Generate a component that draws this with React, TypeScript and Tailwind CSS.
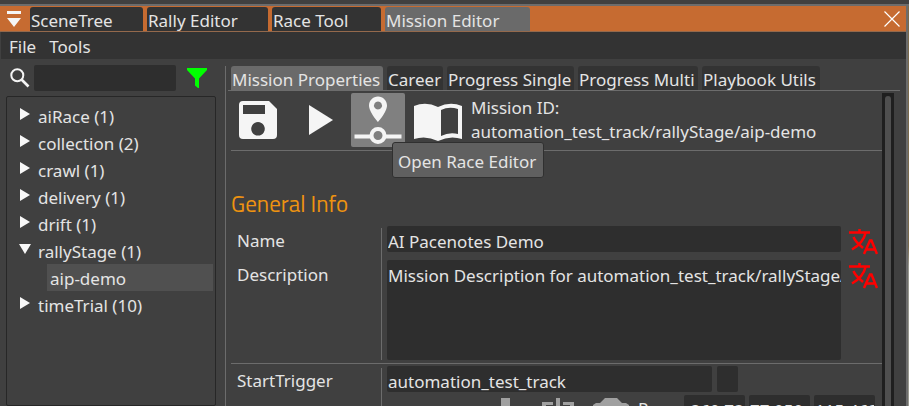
import type { ReactNode } from "react";

const windowTabs = [
  { name: "SceneTree", width: "w-[113px]" },
  { name: "Rally Editor", width: "w-[121px]" },
  { name: "Race Tool", width: "w-[109px]" },
  { name: "Mission Editor", width: "w-[145px]", active: true },
];

const panelTabs = [
  { name: "Mission Properties", width: "w-[152px]", active: true },
  { name: "Career", width: "w-[56px]" },
  { name: "Progress Single", width: "w-[127px]" },
  { name: "Progress Multi", width: "w-[120px]" },
  { name: "Playbook Utils", width: "w-[118px]" },
];

const groups = [
  { name: "aiRace (1)" },
  { name: "collection (2)" },
  { name: "crawl (1)" },
  { name: "delivery (1)" },
  { name: "drift (1)" },
  { name: "rallyStage (1)", children: ["aip-demo"] },
  { name: "timeTrial (10)" },
];

function TitleBar() {
  return (
    <header className="flex h-[26px] items-end border-b border-[#94694c] bg-[#c66b31]">
      <button aria-label="Window list" className="h-full w-[30px] shrink-0 pl-[7px]">
        <svg width="14" height="18" viewBox="0 0 14 18" fill="#f5f5f5">
          <path d="M0 1h14v3H0zM0 8h14L7 17z" />
        </svg>
      </button>
      <nav className="flex h-6 gap-1">
        {windowTabs.map((tab) => (
          <button
            key={tab.name}
            className={`${tab.width} ${tab.active ? "bg-[#6a6a6a]" : "bg-[#333333]"} h-6 rounded-t-[3px] pl-px text-left leading-[28px] whitespace-nowrap`}
          >
            {tab.name}
          </button>
        ))}
      </nav>
      <button aria-label="Close" className="ml-auto mr-[6px] flex h-full items-center">
        <svg width="16" height="16" viewBox="0 0 16 16" stroke="#ffffff" strokeWidth="1.2">
          <path d="M0.5 0.5L15.5 15.5M15.5 0.5L0.5 15.5" />
        </svg>
      </button>
    </header>
  );
}

function Arrow({ open }: { open?: boolean }) {
  return (
    <svg width="12" height="12" viewBox="0 0 12 12" fill="#f8f8f8" className="mb-1 shrink-0">
      <path d={open ? "M0 1h12L6 11z" : "M1 0l10 6L1 12z"} />
    </svg>
  );
}

function Sidebar() {
  return (
    <aside className="flex w-[225px] shrink-0 flex-col pr-[9px] pl-[6px]">
      <div className="flex h-9 items-center">
        <label htmlFor="search" className="w-7 shrink-0 pl-1">
          <svg width="20" height="20" viewBox="0 0 20 20" fill="none" stroke="#f5f5f5">
            <circle cx="7.3" cy="7.3" r="6" strokeWidth="2" />
            <path d="M11.5 11.5l7 7" strokeWidth="2.6" />
          </svg>
        </label>
        <input id="search" aria-label="Search" className="h-[26px] w-[142px] rounded-[2px] bg-[#2e2e2e] px-1 outline-none" />
        <button aria-label="Filter" className="ml-[10px]">
          <svg width="22" height="22" viewBox="0 0 22 22" fill="#00ff00">
            <path d="M1 1h20v2l-8 8.5V21h-1l-3-2.5v-7L1 3z" />
          </svg>
        </button>
      </div>
      <ul className="flex-1 rounded-[2px] border border-[#272727] pt-[5px] pr-[2px] pl-[12px]">
        {groups.map((group) => (
          <li key={group.name}>
            <button className="flex h-[27px] w-full items-center gap-[7px] text-left leading-[27px]">
              <Arrow open={!!group.children} />
              <span className="pt-[2px]">{group.name}</span>
            </button>
            {group.children?.map((child) => (
              <button key={child} className="ml-7 block h-[27px] w-[166px] bg-[#505050] pl-[3px] text-left leading-[29px]">
                {child}
              </button>
            ))}
          </li>
        ))}
      </ul>
    </aside>
  );
}

function ToolButton({ label, active, children }: { label: string; active?: boolean; children: ReactNode }) {
  return (
    <button
      aria-label={label}
      className={`${active ? "bg-[#808080]" : ""} relative flex size-[54px] shrink-0 items-center justify-center rounded-[2px]`}
    >
      {children}
    </button>
  );
}

function Toolbar() {
  return (
    <div className="flex h-[58px] items-start gap-[6px] border-b border-[#6c6c6c]">
      <ToolButton label="Save">
        <svg width="54" height="54" viewBox="0 0 54 54" fill="#f5f5f5" fillRule="evenodd">
          <path d="M12 8h26l8 8v26q0 4-4 4H12q-4 0-4-4V12q0-4 4-4zM12 12v9h22v-9zM27 29a6.8 6.8 0 1 0 .01 0z" />
        </svg>
      </ToolButton>
      <ToolButton label="Play">
        <svg width="54" height="54" viewBox="0 0 54 54" fill="#f5f5f5">
          <path d="M18 12l24 15-24 15z" />
        </svg>
      </ToolButton>
      <ToolButton label="Open Race Editor" active>
        <svg width="54" height="54" viewBox="0 0 54 54" fill="#f5f5f5" fillRule="evenodd">
          <path d="M27 3.5c-5 0-9 4-9 9C18 19 27 29 27 29s9-10 9-16.5c0-5-4-9-9-9zM27 8.5a4 4 0 1 1-.01 0z" />
          <path d="M3.5 41.5h16v4h-16zM34.5 41.5h16v4h-16z" />
          <circle cx="27" cy="42.5" r="6.5" fill="none" stroke="#f5f5f5" strokeWidth="4" />
        </svg>
        <span
          role="tooltip"
          className="absolute top-[49px] left-[41px] z-10 h-9 rounded-[3px] border border-[#303030] bg-[#606060] pr-[7px] pl-[5px] leading-[38px] whitespace-nowrap"
        >
          Open Race Editor
        </span>
      </ToolButton>
      <ToolButton label="Mission book">
        <svg width="54" height="54" viewBox="0 0 54 54" fill="#f5f5f5" fillRule="evenodd">
          <path d="M3 13Q15 8 27 14Q39 8 51 13V46Q39 42 27 48Q15 42 3 46zM30 17V43Q38 39 47 41V16Q38 13 30 17z" />
        </svg>
      </ToolButton>
      <p className="pt-[3px] leading-6">
        Mission ID:
        <br />
        automation_test_track/rallyStage/aip-demo
      </p>
    </div>
  );
}

function TranslateButton({ label }: { label: string }) {
  return (
    <button type="button" aria-label={label} className="mt-[2px] mr-1 ml-[7px] h-[27px] shrink-0">
      <svg width="30" height="27" viewBox="0 0 30 27" fill="none" stroke="#ff0000" strokeWidth="2.5">
        <path d="M1 4.5h21M11.5 1v3.5M5.500 9c2 5 6 8 9.5 11M17.5 5C16 12 10 18 4 21.5" />
        <path d="M16 26l6-13.5h1.5L29 26M18.5 21.5h8" />
      </svg>
    </button>
  );
}

const field = "rounded-[2px] bg-[#2e2e2e] px-px outline-none";

function NumberBox({ label, value }: { label: string; value: string }) {
  return <input aria-label={label} defaultValue={value} className={`${field} h-[26px] w-[61px] pt-[4px]`} />;
}

function Properties() {
  return (
    <form className="flex flex-col">
      <h2 className="mt-[32px] font-['Titillium_Web','Roboto',sans-serif] text-[23px] leading-[42px] text-[#ee9310]">General Info</h2>
      <div className="flex border-b border-[#6c6c6c] pt-px pb-[3px]">
        <div className="mt-[2px] w-[151px] shrink-0 border-r border-[#6c6c6c] pl-[6px]">
          <label htmlFor="name" className="block h-[34px] leading-[25px]">Name</label>
          <label htmlFor="description" className="block leading-[25px]">Description</label>
        </div>
        <div className="ml-[5px] flex min-w-0 flex-1 flex-col gap-2">
          <div className="flex h-[26px]">
            <input id="name" defaultValue="AI Pacenotes Demo" className={`${field} h-[26px] min-w-0 flex-1 pt-[4px]`} />
            <TranslateButton label="Translate name" />
          </div>
          <div className="flex items-start">
            <textarea
              id="description"
              wrap="off"
              defaultValue="Mission Description for automation_test_track/rallyStage/aip-demo"
              className={`${field} h-[100px] min-w-0 flex-1 resize-none overflow-hidden pt-[2px] leading-[27px] whitespace-pre`}
            />
            <TranslateButton label="Translate description" />
          </div>
        </div>
      </div>
      <div className="flex pt-[2px]">
        <div className="mt-[2px] h-[60px] w-[151px] shrink-0 border-r border-[#6c6c6c] pl-[6px]">
          <label htmlFor="trigger" className="block leading-[25px]">StartTrigger</label>
        </div>
        <div className="ml-[5px] min-w-0 flex-1">
          <div className="flex gap-[5px]">
            <input id="trigger" defaultValue="automation_test_track" className={`${field} h-[26px] w-[325px] pt-[4px]`} />
            <button type="button" aria-label="Select level" className={`${field} h-[26px] w-[21px]`} />
          </div>
          <div className="mt-[3px] flex">
            <div className="flex w-[251px] shrink-0 pl-[94px]">
              <svg width="157" height="30" viewBox="0 0 157 30" fill="#a0a0a0">
                <path d="M20 3h9v14h6L24.5 28 14 17h6z" />
                <path d="M61 7h11v3h-7v12h7v3H61zM75 3h4v26h-4zM82 7h11v18h-9v-3h5V10h-7z" />
                <path d="M115 8h4l5-5h12l5 5h4l3 2v17h-36V10z" />
              </svg>
            </div>
            <span className="w-[46px] shrink-0 pt-px">Pos</span>
            <div className="flex gap-1">
              <NumberBox label="Position X" value="-360.73" />
              <NumberBox label="Position Y" value="77.050" />
              <NumberBox label="Position Z" value="115.463" />
            </div>
          </div>
        </div>
      </div>
    </form>
  );
}

export default function App() {
  return (
    <div className="flex h-screen flex-col overflow-hidden bg-[#404040] font-['Noto_Sans','Open_Sans',sans-serif] text-[17px] text-[#e4e4e4]">
      <div className="h-[6px] shrink-0 border-b-2 border-[#6c6c6c]" />
      <div className="flex min-h-0 flex-1">
        <div className="flex min-w-0 flex-1 flex-col">
          <TitleBar />
          <nav className="ml-px flex h-[27px] shrink-0 gap-[13px] bg-[#333333] pl-2 leading-[29px]">
            <button>File</button>
            <button>Tools</button>
          </nav>
          <div className="flex min-h-0 flex-1 pt-px">
            <Sidebar />
            <main className="mt-[6px] flex min-w-0 flex-1 flex-col border-l border-[#6c6c6c] pl-[2px]">
              <div className="mr-[6px] flex h-[25px] shrink-0 gap-1 border-b border-[#6c6c6c] pl-[3px]">
                {panelTabs.map((tab) => (
                  <button
                    key={tab.name}
                    className={`${tab.width} ${tab.active ? "bg-[#6a6a6a]" : "bg-[#333333]"} rounded-t-[3px] pl-px text-left leading-[28px] whitespace-nowrap`}
                  >
                    {tab.name}
                  </button>
                ))}
              </div>
              <div className="mt-[2px] mr-3 flex min-h-0 flex-1 pl-[3px]">
                <div className="min-w-0 flex-1 overflow-hidden">
                  <Toolbar />
                  <Properties />
                </div>
                <div className="w-3 shrink-0 bg-[#1f1f1f] px-[3px] pt-[3px]">
                  <div className="h-full rounded-t-[3px] bg-[#4f4f4f]" />
                </div>
              </div>
            </main>
          </div>
        </div>
        <div className="w-[3px] shrink-0 border-l-2 border-[#6c6c6c] bg-linear-to-b from-[#7a6a4c] from-60% to-[#9a9a90] to-65%" />
      </div>
    </div>
  );
}
